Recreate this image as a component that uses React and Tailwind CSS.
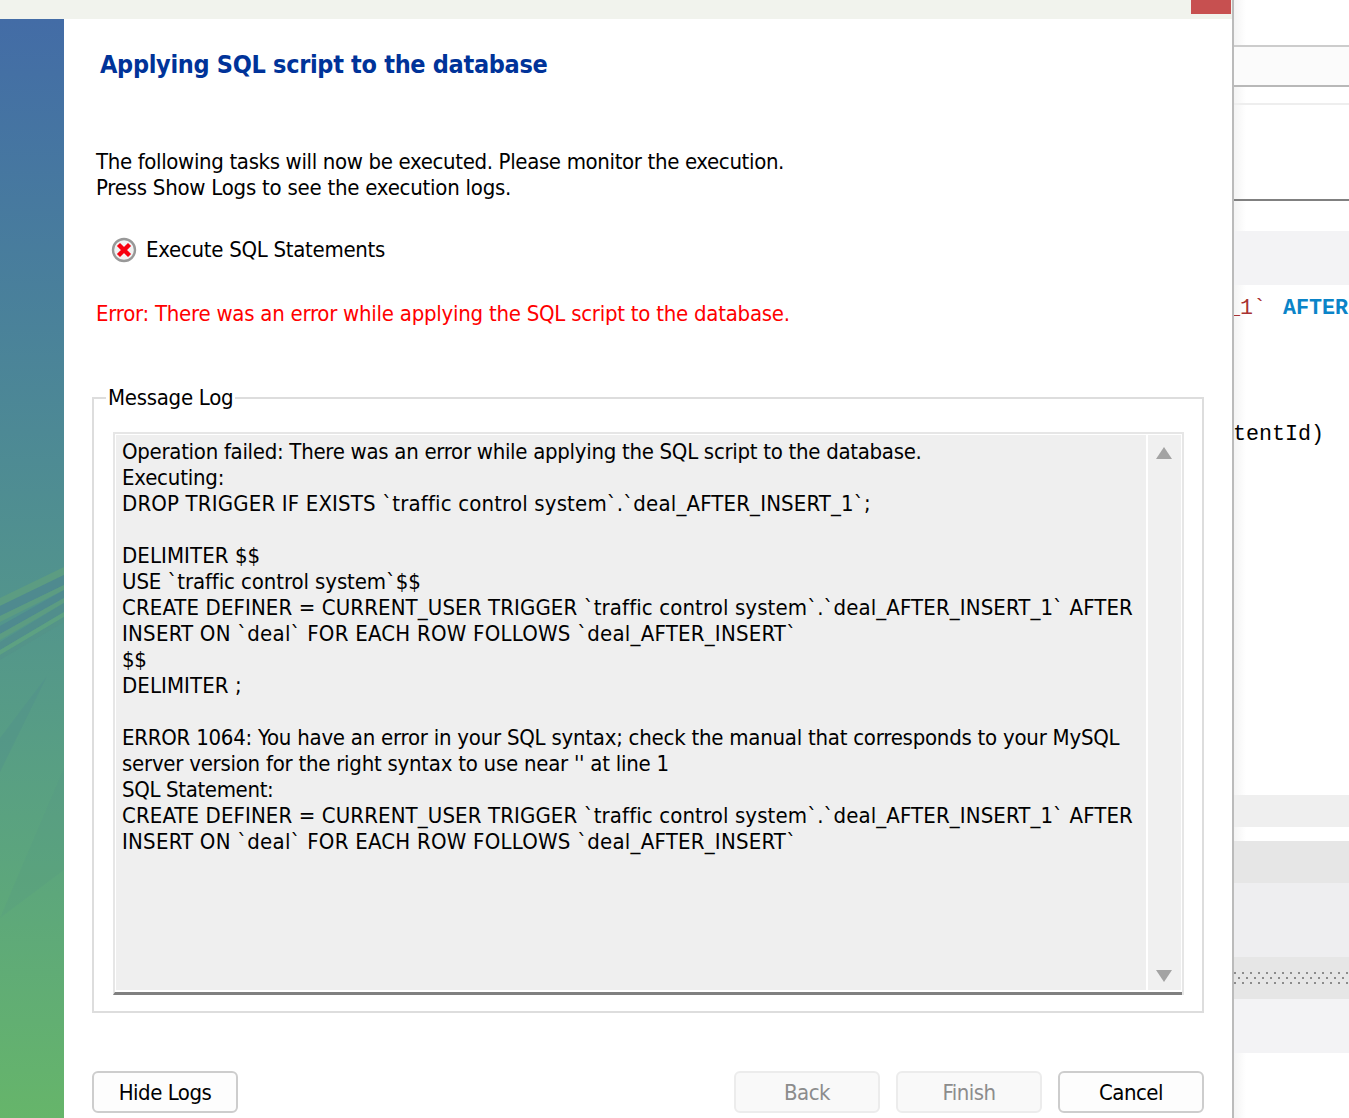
// per-line tracking: the DejaVu widths differ from the original font per line
const LOG_LINES = [
  ["Operation failed: There was an error while applying the SQL script to the database.", "tracking-[-0.29px]"],
  ["Executing:", "tracking-[-0.2px]"],
  ["DROP TRIGGER IF EXISTS `traffic control system`.`deal_AFTER_INSERT_1`;", "tracking-[0.16px]"],
  ["", ""],
  ["DELIMITER $$", "tracking-[0.08px]"],
  ["USE `traffic control system`$$", "tracking-[-0.1px]"],
  ["CREATE DEFINER = CURRENT_USER TRIGGER `traffic control system`.`deal_AFTER_INSERT_1` AFTER", "tracking-[0.11px]"],
  ["INSERT ON `deal` FOR EACH ROW FOLLOWS `deal_AFTER_INSERT`", "tracking-[0.23px]"],
  ["$$", ""],
  ["DELIMITER ;", "tracking-[0.08px]"],
  ["", ""],
  ["ERROR 1064: You have an error in your SQL syntax; check the manual that corresponds to your MySQL", "tracking-[-0.24px]"],
  ["server version for the right syntax to use near '' at line 1", "tracking-[-0.25px]"],
  ["SQL Statement:", "tracking-[-0.35px]"],
  ["CREATE DEFINER = CURRENT_USER TRIGGER `traffic control system`.`deal_AFTER_INSERT_1` AFTER", "tracking-[0.11px]"],
  ["INSERT ON `deal` FOR EACH ROW FOLLOWS `deal_AFTER_INSERT`", "tracking-[0.23px]"],
];

function SideBand() {
  return (
    <div className="w-[64px] shrink-0 bg-gradient-to-b from-[#436ca6] to-[#66b56a]">
      <svg viewBox="0 19 64 1099" className="block w-[64px] h-[1099px]">
        <polygon points="64,567 64,575 0,606 0,598" fill="#5c9c82" />
        <polygon points="64,575 64,585 0,616 0,606" fill="#4f8a8f" />
        <polygon points="64,585 64,590 0,622 0,616" fill="#5c9c82" />
        <polygon points="64,590 64,598 0,634 0,626" fill="#4f8a8f" />
        <polygon points="64,598 64,603 0,640 0,634" fill="#5c9c82" />
        <polygon points="64,603 64,612 0,650 0,642" fill="#518e8c" />
        <polygon points="64,612 64,617 0,655 0,650" fill="#5da182" />
        <polygon points="64,617 64,622 0,660 0,655" fill="#549489" />
        <polygon points="47,676 0,738 0,772" fill="#4f8a8f" fillOpacity="0.3" />
        <polygon points="64,768 64,870 0,918" fill="#4f8a8f" fillOpacity="0.12" />
      </svg>
    </div>
  );
}

function ErrorIcon() {
  return (
    <svg viewBox="0 0 26 26" className="w-[26px] h-[26px] shrink-0">
      <circle cx="13" cy="13" r="11" fill="#f2f2f2" stroke="#989898" strokeWidth="2.4" />
      <path d="M9 9 L17 17 M17 9 L9 17" stroke="#f8000f" strokeWidth="4.4" strokeLinecap="square" />
    </svg>
  );
}

function WizButton({ label, disabled, className }) {
  return (
    <button
      className={`w-[146px] h-[42px] pt-[2px] rounded-[6px] border-2 tracking-[-0.5px] ${
        disabled ? "border-[#ececec] bg-[#f9f9f9] text-[#8c8c8c]" : "border-[#cdcdcd] bg-[#fdfdfd] text-black"
      } ${className || ""}`}
    >
      {label}
    </button>
  );
}

function DotRow({ className }) {
  return (
    <div className={`h-[2px] bg-[repeating-linear-gradient(90deg,#8c8c8c_0,#8c8c8c_2px,transparent_2px,transparent_8px)] ${className || ""}`} />
  );
}

function RightPane() {
  return (
    <div className="flex-1 min-w-0 h-[1118px] overflow-hidden tracking-normal bg-gradient-to-r from-[#f4f4f4] to-white to-[12px]">
      <div className="h-[45px]" />
      <div className="h-[42px] border-y-2 border-t-[#cccccc] border-b-[#b8b8b8] bg-[#fbfbfb]" />
      <div className="h-[16px]" />
      <div className="h-[2px] bg-[#eeeeee]" />
      <div className="h-[94px]" />
      <div className="h-[2px] bg-[#808080]" />
      <div className="h-[30px]" />
      <div className="h-[54px] bg-[#f3f3f5]" />
      <div className="h-[44px] pt-[2px] whitespace-pre font-['Liberation_Mono',monospace] text-[21.7px] leading-[44px] ml-[-7px]">
        <span className="text-[#a83232]">_1`</span>
        <span className="ml-[4px] font-bold text-[#0a84c8]"> AFTER</span>
      </div>
      <div className="h-[82px]" />
      <div className="h-[44px] pt-[2px] ml-[-1px] whitespace-pre font-['Liberation_Mono',monospace] text-[21.7px] leading-[44px] text-black">
        tentId)
      </div>
      <div className="h-[340px]" />
      <div className="h-[32px] bg-[#efefef]" />
      <div className="h-[14px]" />
      <div className="h-[42px] bg-[#e6e6e6]" />
      <div className="h-[74px] bg-[#eeeef0]" />
      <div className="h-[42px] bg-[#e6e6e6] flex flex-col justify-center gap-[3px]">
        <DotRow />
        <DotRow className="ml-[4px]" />
        <DotRow />
      </div>
      <div className="h-[54px] bg-[#f3f3f5]" />
    </div>
  );
}

export default function App() {
  return (
    <div className="w-[1349px] h-[1118px] flex overflow-hidden bg-white font-['DejaVu_Sans',sans-serif] [font-stretch:condensed] text-[22px] leading-[26px] tracking-[-0.28px] text-black">
      <div className="w-[1234px] shrink-0 h-[1118px] flex flex-col border-r-2 border-[#bbbbbb]">
        <div className="h-[19px] shrink-0 bg-[#f1f3ed] flex justify-end items-start">
          <div className="w-[40px] h-[14px] bg-[#c75050] mr-[1px]" />
        </div>
        <div className="flex-1 flex min-h-0">
          <SideBand />
          <div className="flex-1 min-w-0 pl-[28px] pr-[28px]">
            <h1 className="mt-[28px] ml-[8px] font-bold text-[#003399] text-[25px] leading-[36px] tracking-[-0.31px]">
              Applying SQL script to the database
            </h1>
            <p className="mt-[66px] ml-[4px]">
              <span className="tracking-[-0.35px]">The following tasks will now be executed. Please monitor the execution.</span>
              <br />
              <span className="tracking-[-0.24px]">Press Show Logs to see the execution logs.</span>
            </p>
            <div className="mt-[36px] ml-[19px] flex items-center gap-[9px]">
              <ErrorIcon />
              <span>Execute SQL Statements</span>
            </div>
            <p className="mt-[38px] ml-[4px] text-[#ff0000] tracking-[-0.25px]">
              Error: There was an error while applying the SQL script to the database.
            </p>
            <fieldset className="mt-[58px] min-w-0 h-[628px] border-2 border-[#dddddd]">
              <legend className="ml-[12px] px-[2px] leading-[26px]">Message Log</legend>
              <div className="mt-[21px] ml-[19px] mr-[18px] h-[563px] border-r-2 border-[#e6e6e6]">
                <div className="h-full flex gap-[2px] border-t-2 border-l-2 border-[#e6e6e6] border-b-[3px] border-b-[#808080] p-[1px] pb-[2px]">
                  <div className="flex-1 min-w-0 bg-[#efefef] pt-[4px] pl-[6px] whitespace-pre overflow-hidden">
                    {LOG_LINES.map(([line, track], i) => (
                      <div key={i} className={`h-[26px] ${track}`}>{line}</div>
                    ))}
                  </div>
                  <div className="w-[33px] shrink-0 bg-[#f0f0f0] flex flex-col items-center justify-between pt-[12px] pb-[8px] pr-[2px]">
                    <svg viewBox="0 0 16 12" className="w-[16px] h-[12px]"><polygon points="8,0 16,12 0,12" fill="#a3a3a3" /></svg>
                    <svg viewBox="0 0 16 12" className="w-[16px] h-[12px]"><polygon points="0,0 16,0 8,12" fill="#a3a3a3" /></svg>
                  </div>
                </div>
              </div>
            </fieldset>
            <div className="mt-[58px] flex gap-[16px]">
              <WizButton label="Hide Logs" className="mr-auto" />
              <WizButton label="Back" disabled />
              <WizButton label="Finish" disabled />
              <WizButton label="Cancel" />
            </div>
          </div>
        </div>
      </div>
      <RightPane />
    </div>
  );
}
